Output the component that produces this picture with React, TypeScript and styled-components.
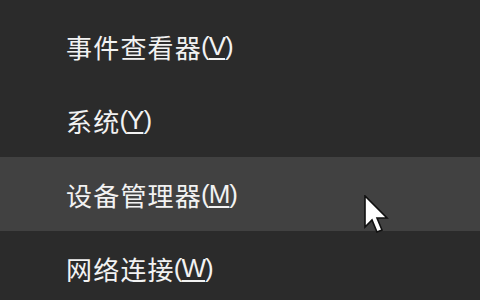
import styled, { createGlobalStyle } from "styled-components";

const Global = createGlobalStyle`
  html, body {
    margin: 0;
    padding: 0;
    background: #2b2b2b;
  }
`;

const Menu = styled.div`
  position: relative;
  width: 480px;
  height: 300px;
  overflow: hidden;
  background: #2b2b2b;
  display: flex;
  flex-direction: column;
  padding-top: 9px;
  box-sizing: border-box;
  font-family: "Microsoft YaHei", "Noto Sans CJK SC", sans-serif;
`;

const Item = styled.div<{ $active?: boolean }>`
  height: 74px;
  flex-shrink: 0;
  display: flex;
  align-items: center;
  padding-left: 66px;
  background: ${(p) => (p.$active ? "#414141" : "transparent")};
  color: #f2f2f2;
  font-size: 26px;
  letter-spacing: 1.2px;
`;

const Key = styled.span`
  font-family: "Liberation Sans", sans-serif;
  font-size: 26px;
  letter-spacing: -1px;
  margin-left: -1px;

  u {
    text-decoration-thickness: 2px;
    text-underline-offset: 3px;
  }
`;

const Cursor = styled.svg`
  position: absolute;
  left: 364px;
  top: 195px;
`;

const items = [
  { label: "事件查看器", key: "V" },
  { label: "系统", key: "Y" },
  { label: "设备管理器", key: "M", active: true },
  { label: "网络连接", key: "W" },
];

export default function App() {
  return (
    <>
      <Global />
      <Menu>
        {items.map((it) => (
          <Item key={it.label} $active={it.active}>
            {it.label}
            <Key>
              (<u>{it.key}</u>)
            </Key>
          </Item>
        ))}
        <Cursor width="26" height="40" viewBox="0 0 13 20">
          <path
            d="M0.5 0.5 L0.5 16 L4 12.5 L6.5 18.5 L9 17.5 L6.5 11.5 L11.5 11.5 Z"
            fill="#ffffff"
            stroke="#111"
            strokeWidth="0.8"
          />
        </Cursor>
      </Menu>
    </>
  );
}
